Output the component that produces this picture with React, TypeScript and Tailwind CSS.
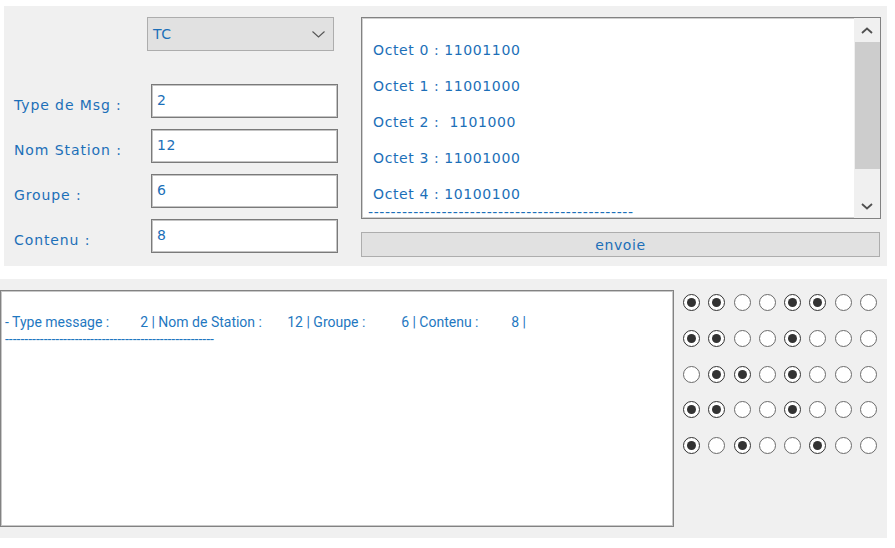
import React from "react";

const octets = ["11001100", "11001000", "01101000", "11001000", "10100100"];

const listLines = [
	"",
	" Octet 0 : 11001100",
	"",
	" Octet 1 : 11001000",
	"",
	" Octet 2 :  1101000",
	"",
	" Octet 3 : 11001000",
	"",
	" Octet 4 : 10100100",
	"-----------------------------------------------",
];

const fields = [
	{ label: "Type de Msg :", value: "2" },
	{ label: "Nom Station :", value: "12" },
	{ label: "Groupe :", value: "6" },
	{ label: "Contenu :", value: "8" },
];

// each log segment: label on the left, value padded to the right edge
const logSegments = [
	{ label: "- Type message :", value: "2", width: "w-[143px]" },
	{ label: " | Nom de Station :", value: "12", width: "w-[155px]" },
	{ label: " | Groupe :", value: "6", width: "w-[106px]" },
	{ label: " | Contenu :", value: "8", width: "w-[110px]" },
];

function Chevron({ up = false }: { up?: boolean }) {
	return (
		<svg width="12" height="7" viewBox="0 0 12 7">
			<polyline
				points={up ? "1,6 6,1.5 11,6" : "1,1 6,5.5 11,1"}
				fill="none"
				stroke="#505050"
				strokeWidth="1.8"
			/>
		</svg>
	);
}

function Radio({ checked }: { checked: boolean }) {
	return (
		<span
			className={`flex h-[17px] w-[17px] items-center justify-center rounded-full border bg-white ${
				checked ? "border-[#333333]" : "border-[#6b6b6b]"
			}`}
		>
			{checked && <span className="h-[9px] w-[9px] rounded-full bg-[#333333]" />}
		</span>
	);
}

export default function App() {
	return (
		<div className="min-h-screen bg-white pt-[6px] font-['DejaVu_Sans',sans-serif] text-[#1c6fb8]">
			{/* top panel */}
			<div className="ml-[4px] flex h-[260px] w-[883px] bg-[#f0f0f0]">
				<div className="w-[357px] shrink-0 pl-[10px] pt-[11px]">
					<div className="ml-[133px] flex h-[34px] w-[187px] items-center justify-between border border-[#adadad] bg-[#e1e1e1] pl-[5px] pr-[8px] pt-[1px] text-[14px] tracking-[0.6px]">
						<span>TC</span>
						<svg width="13" height="7" viewBox="0 0 13 7">
							<polyline points="0.5,0.5 6.5,6 12.5,0.5" fill="none" stroke="#555" strokeWidth="1.1" />
						</svg>
					</div>
					<div className="mt-[33px] flex flex-col gap-[11px]">
						{fields.map((f) => (
							<div key={f.label} className="flex h-[34px] items-center">
								<span className="w-[137px] pt-[9px] text-[14px] tracking-[0.9px]">{f.label}</span>
								<div className="h-[34px] w-[187px] border border-[#7a7a7a] bg-white pl-[5px] pt-[7px] text-[14px] leading-[16px] tracking-[0.6px] shadow-[inset_0_0_0_1px_#c4c4c4]">
									{f.value}
								</div>
							</div>
						))}
					</div>
				</div>
				<div className="pt-[11px]">
					<div className="flex h-[202px] w-[520px] border border-[#828282] bg-white shadow-[inset_0_0_0_1px_#d0d0d0]">
						<div className="flex-1 overflow-hidden whitespace-pre pl-[6px] pt-[5px] text-[14px] leading-[18px] tracking-[0.6px]">
							{listLines.map((l, i) => (
								<div key={i} className="h-[18px]">
									{l}
								</div>
							))}
						</div>
						<div className="flex w-[26px] flex-col items-center bg-[#f0f0f0]">
							<div className="flex h-[24px] items-center justify-center">
								<Chevron up />
							</div>
							<div className="h-[127px] w-[25px] bg-[#cdcdcd]" />
							<div className="flex-1" />
							<div className="flex h-[24px] items-center justify-center">
								<Chevron />
							</div>
						</div>
					</div>
					<button
						type="button"
						className="mt-[13px] flex h-[25px] w-[519px] items-center justify-center border border-[#adadad] bg-[#e1e1e1] pt-[1px] text-[14px] tracking-[0.6px] text-[#1c6fb8]"
					>
						envoie
					</button>
				</div>
			</div>

			{/* bottom panel */}
			<div className="mt-[13px] flex h-[259px] w-[887px] items-start bg-[#f0f0f0]">
				<div className="mt-[11px] h-[237px] w-[674px] shrink-0 whitespace-pre border border-[#828282] bg-white pl-[4px] pt-[6px] font-['Roboto',sans-serif] text-[14px] leading-[17px] text-[#1f78c1] shadow-[inset_0_0_0_1px_#c8c8c8]">
					<div className="h-[17px]" />
					<div className="flex h-[17px]">
						{logSegments.map((s) => (
							<span key={s.label} className={`flex justify-between ${s.width}`}>
								<span>{s.label}</span>
								<span>{s.value}</span>
							</span>
						))}
						<span>{" |"}</span>
					</div>
					<div>{"------------------------------------------------------"}</div>
				</div>
				<div className="ml-[5px] mt-[6px] grid grid-cols-[repeat(8,25.25px)] content-start">
					{octets.map((o, r) =>
						o.split("").map((b, c) => (
							<div key={`${r}-${c}`} className="flex h-[35.7px] items-center justify-center">
								<Radio checked={b === "1"} />
							</div>
						)),
					)}
				</div>
			</div>
		</div>
	);
}
